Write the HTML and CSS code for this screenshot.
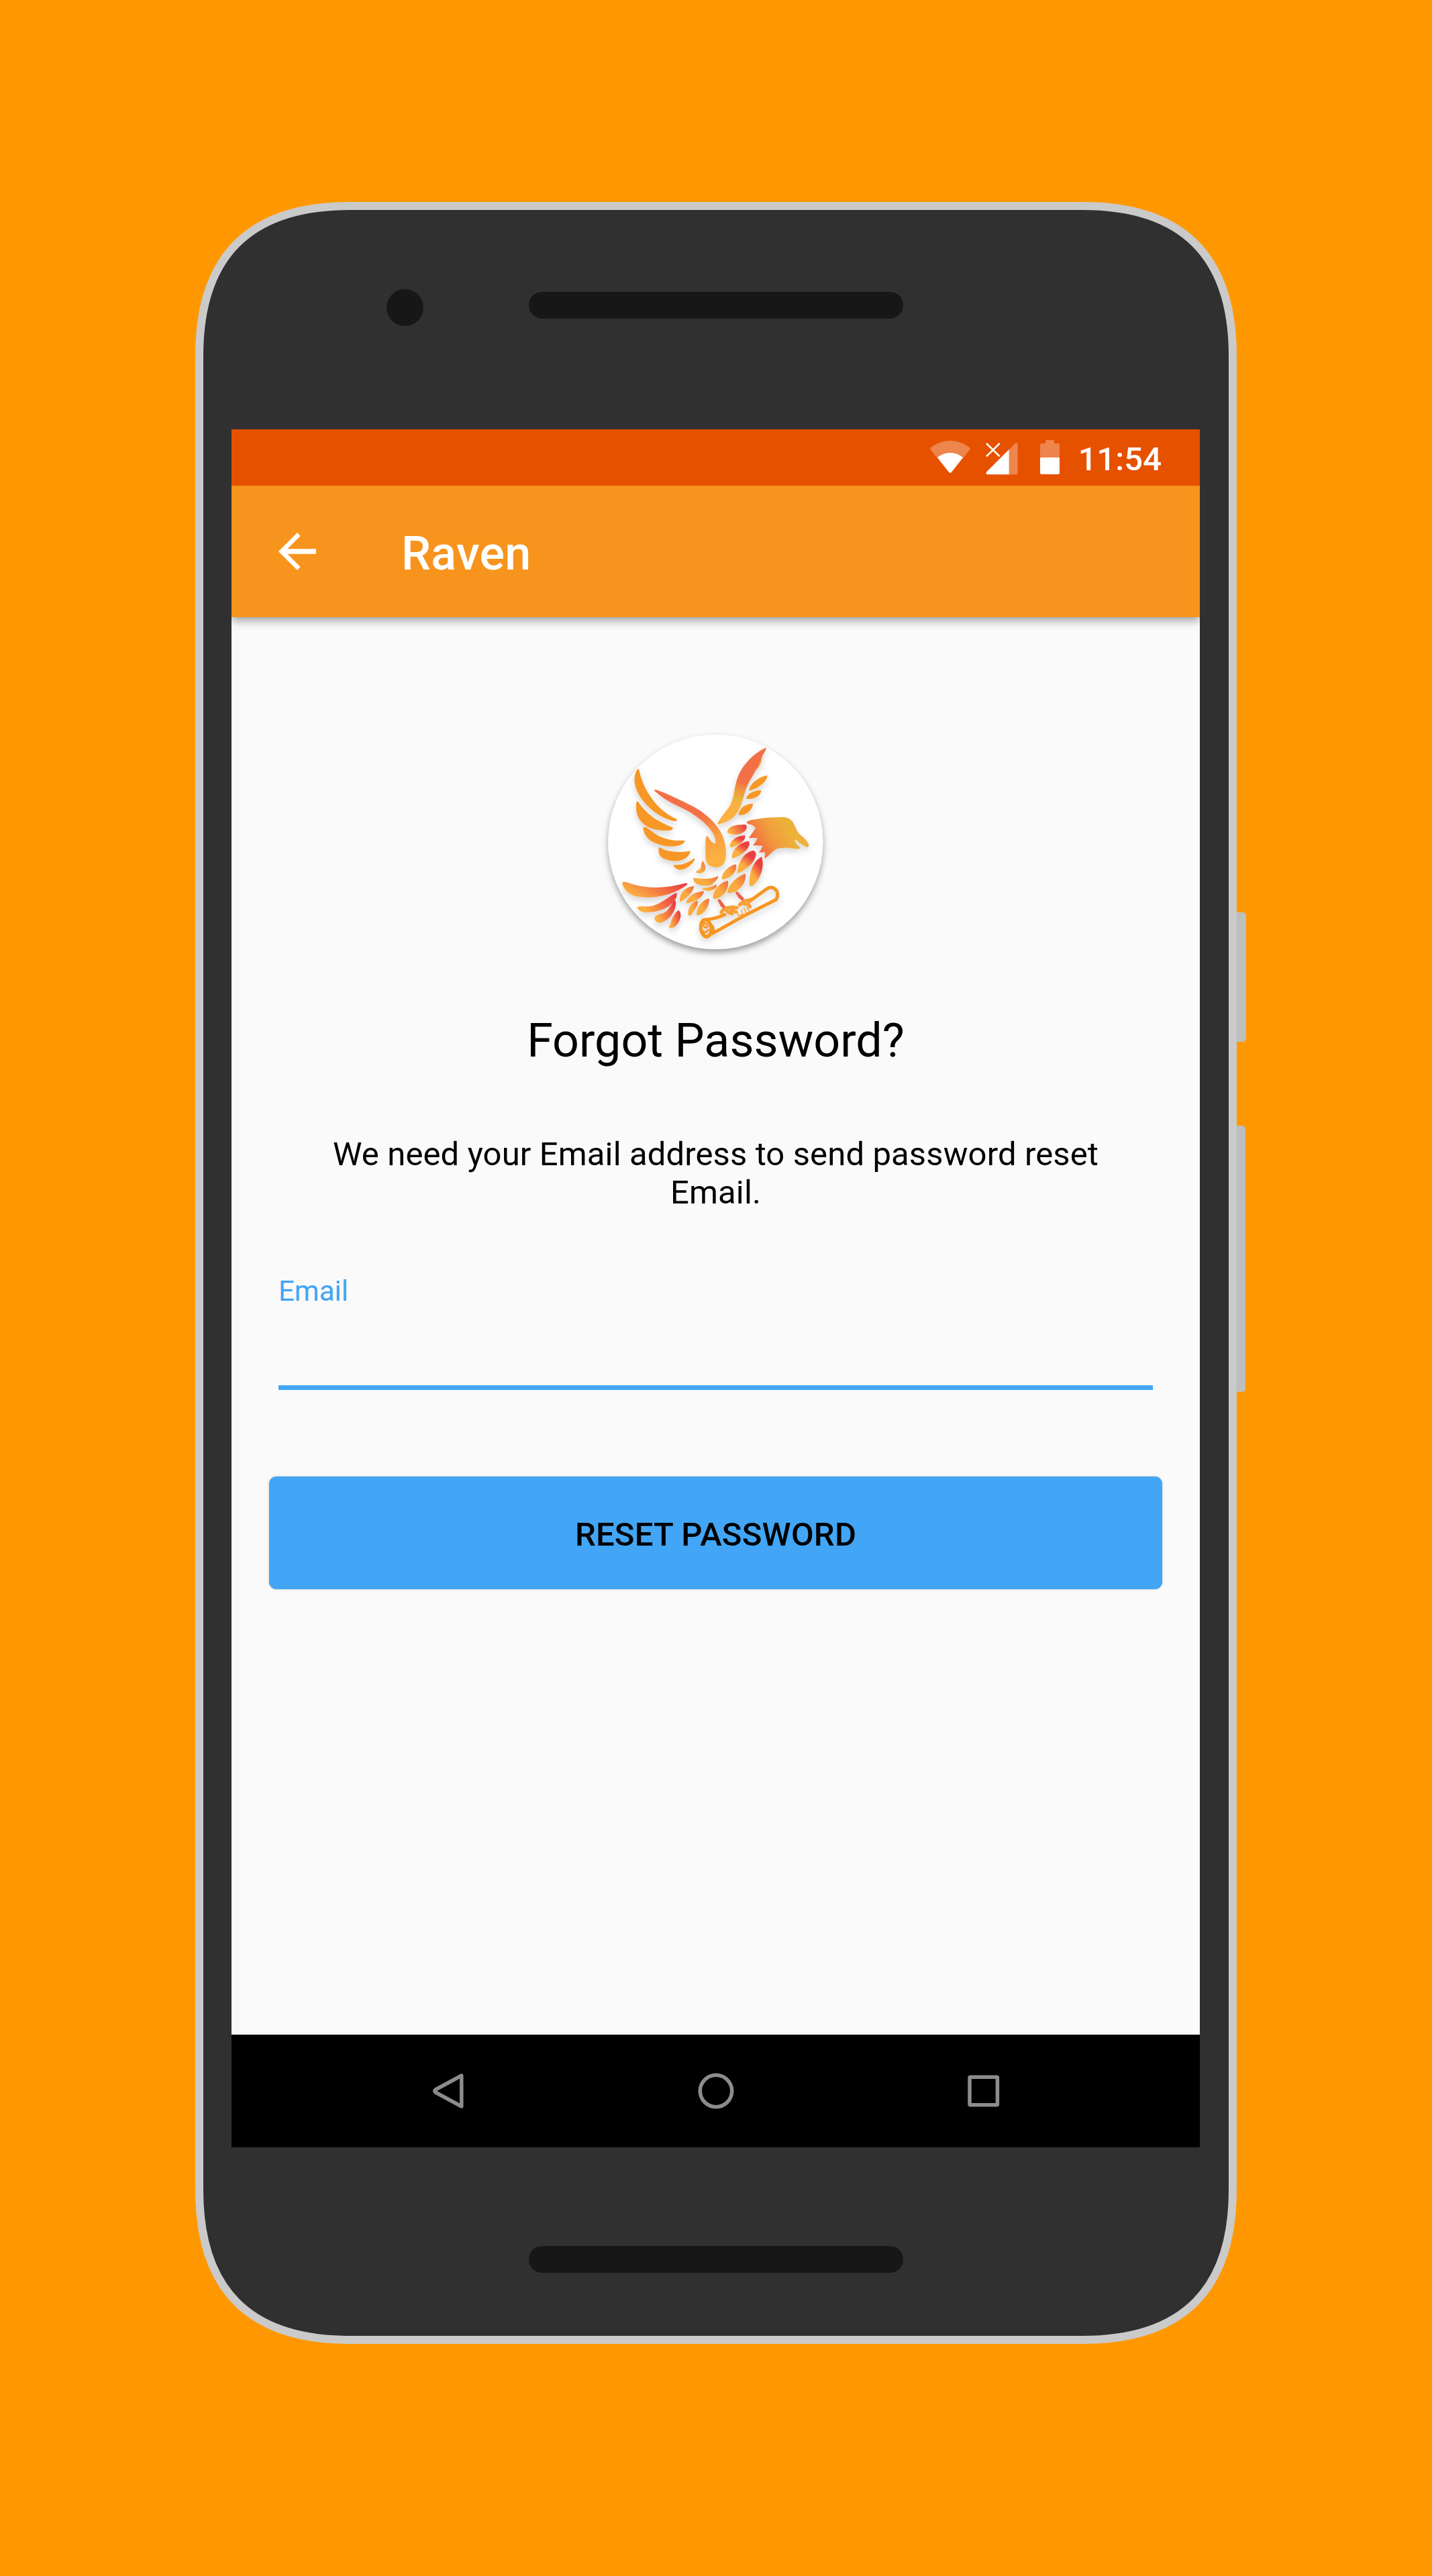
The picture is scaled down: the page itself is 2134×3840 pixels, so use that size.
FILE: index.html
```html
<!DOCTYPE html>
<html lang="en">
<head>
<meta charset="utf-8">
<title>Raven</title>
<link rel="stylesheet" href="styles.css">
</head>
<body>
<main class="stage">
  <div class="phone">
    <svg class="shell" viewBox="0 0 1566 3193" aria-hidden="true">
      <rect x="1530" y="1059" width="36" height="193" rx="5" fill="#bebebe"/>
      <rect x="1530" y="1377" width="35" height="397" rx="5" fill="#bebebe"/>
      <path d="M6 230Q6 6 230 6H1322Q1546 6 1546 230V2963Q1546 3187 1322 3187H230Q6 3187 6 2963Z" fill="#303030" stroke="#cacaca" stroke-width="12"/>
    </svg>
    <span class="camera"></span>
    <header class="bezel bezel-top"><span class="speaker"></span></header>
    <section class="screen">
      <div class="status">
        <svg class="wifi" viewBox="0 0 180 144"><path d="M3 41Q-3 34 4 29Q44 0 90 0T176 29Q183 34 177 41L96 140Q90 147 84 140Z" fill="#fff" opacity=".3"/><path d="M33 75Q58 54 90 54T147 75L96 140Q90 147 84 140Z" fill="#fff"/></svg>
        <svg class="cell" viewBox="0 0 144 144"><path d="M104 31L130 4Q143-4 143 9V135Q143 142 136 142H104Z" fill="#fff" opacity=".3"/><path d="M104 30V142H8Q-3 140 4 130Z" fill="#fff"/><path d="M3 3L62 61M62 3L3 61" stroke="#fff" stroke-width="8" fill="none"/></svg>
        <svg class="battery" viewBox="0 0 87 153"><path d="M24 0H63V15H80Q87 15 87 22V79H0V22Q0 15 7 15H24Z" fill="#fff" opacity=".3"/><path d="M0 78H87V146Q87 153 80 153H7Q0 153 0 146Z" fill="#fff"/></svg>
        <time class="clock">11:54</time>
      </div>
      <nav class="appbar">
        <svg class="back" viewBox="0 0 168 168"><path d="M168 73V95H40L98 153L84 168L0 84L84 0L98 15L40 73Z" fill="#fff"/></svg>
        <h1 class="brand">Raven</h1>
      </nav>
      <div class="content">
        <svg class="logo" viewBox="0 0 1110 1110" role="img" aria-label="Raven logo">
          <defs>
            <linearGradient id="wing" gradientUnits="userSpaceOnUse" x1="510" y1="430" x2="570" y2="620"><stop stop-color="#f37046"/><stop offset=".5" stop-color="#f99c40"/><stop offset="1" stop-color="#fbb040"/></linearGradient>
            <linearGradient id="up" gradientUnits="userSpaceOnUse" x1="685" y1="290" x2="635" y2="450"><stop stop-color="#f27046"/><stop offset=".12" stop-color="#f0883f"/><stop offset=".48" stop-color="#edb43c"/><stop offset=".6" stop-color="#fbb043"/></linearGradient>
            <linearGradient id="head" gradientUnits="userSpaceOnUse" x1="735" y1="565" x2="875" y2="485"><stop stop-color="#f26b43"/><stop offset=".5" stop-color="#f19a3d"/><stop offset="1" stop-color="#edb13a"/></linearGradient>
            <linearGradient id="tail" x1="0" y1=".7" x2="1" y2=".3"><stop offset=".1" stop-color="#fbb042"/><stop offset=".85" stop-color="#ee5042"/><stop offset="1" stop-color="#ea3c43"/></linearGradient>
            <linearGradient id="plume" x1=".2" y1="1" x2=".8" y2="0"><stop offset=".3" stop-color="#fbb042"/><stop offset=".75" stop-color="#ec4041"/></linearGradient>
            <linearGradient id="belly" x1="0" y1=".8" x2="1" y2=".1"><stop offset=".4" stop-color="#fbac40"/><stop offset="1" stop-color="#f27043"/></linearGradient>
            <filter id="lift" x="-20%" y="-20%" width="140%" height="150%"><feGaussianBlur stdDeviation="1.6"/><feDropShadow dx="0" dy="15" stdDeviation="14" flood-opacity=".17"/></filter>
            <filter id="disc" x="-20%" y="-20%" width="140%" height="140%"><feDropShadow dx="0" dy="15" stdDeviation="14" flood-opacity=".38"/></filter>
            <clipPath id="round"><circle cx="559" cy="555" r="480"/></clipPath>
          </defs>
          <circle cx="559" cy="555" r="480" fill="#fff" filter="url(#disc)"/>
          <g clip-path="url(#round)"><g filter="url(#lift)">
            <g fill="#f79727">
              <path d="M212 228C220 230 219 247 226 267C250 342 304 416 384 453Q392 464 376 462C322 455 255 405 220 350C190 301 191 251 212 228Z"/>
              <path d="M207 372C216 374 219 387 234 403C266 442 310 468 366 490Q373 501 355 504C301 507 249 497 221 457C200 426 202 390 207 372Z"/>
              <path d="M239 488Q249 487 264 500C305 535 350 552 420 549Q426 553 411 564C379 582 331 577 294 562C258 549 235 519 236 491Z"/>
              <path d="M306 578Q318 583 334 592C374 603 405 601 444 596Q450 600 440 613C416 648 363 645 327 629C304 617 302 600 306 578Z"/>
              <path d="M370 658Q387 658 406 656Q435 650 465 627Q469 633 458 647Q430 680 398 680Q373 675 370 658Z"/>
              <path d="M710 326C708 299 747 266 789 257C797 275 755 315 710 326Z"/>
              <path d="M696 363C698 338 729 326 762 323C765 345 736 366 696 363Z"/>
              <path d="M663 435C663 406 692 384 726 384C726 408 700 438 663 435Z"/>
              <path d="M768 174Q763 212 742 232Q730 237 729 229L738 205Z"/>
            </g>
            <path d="M568 472C580 448 604 421 622 395C647 353 640 290 672 236C703 186 741 154 785 133C788 146 765 170 757 196C738 246 708 279 693 324C681 363 672 409 644 441C625 459 600 468 574 477Q567 478 568 472Z" fill="url(#up)"/>
            <path d="M285 326Q286 319 300 324C345 340 395 365 438 386C503 417 551 458 579 506C597 535 606 571 606 608C606 649 589 668 561 668C529 668 515 650 514 621V551Q515 529 523 529L540 553Q555 567 559 560C564 516 508 461 445 422C399 396 353 382 309 346Z" fill="url(#wing)"/>
            <path d="M698 467C702 459 723 457 744 453C783 446 824 445 857 444C889 445 904 460 914 485C924 507 928 516 947 531Q968 547 977 571Q976 580 967 578Q938 566 922 548Q912 542 914 555Q922 568 940 583Q931 590 915 586C888 580 861 579 836 585C814 593 799 618 780 629Q776 625 780 615Q782 605 777 599Q768 604 753 602Q767 582 769 572Q751 572 726 571Q741 554 747 537Q736 536 707 538Q720 519 738 495Q729 477 703 475Z" fill="url(#head)"/>
            <g fill="url(#plume)">
              <path d="M612 513C610 486 647 477 693 478C708 492 690 515 660 521Q630 526 612 513Z" fill="url(#tail)"/>
              <path d="M623 580C621 550 652 528 690 526C700 546 657 577 623 580Z"/>
              <path d="M632 629C630 589 667 557 707 551C724 575 677 618 632 629Z"/>
              <path d="M656 695C659 647 682 606 725 593C758 598 731 651 694 676Q668 695 656 695Z"/>
              <path d="M711 751C706 700 725 642 765 621C782 669 753 735 720 754Z"/>
            </g>
            <g fill="url(#belly)">
              <path d="M587 722C587 687 622 661 650 655C660 683 629 721 587 722Z"/>
              <path d="M611 784C616 743 655 711 692 697C702 729 666 788 611 784Z"/>
              <path d="M547 808C548 765 582 735 614 728C625 755 591 817 547 808Z"/>
              <path d="M470 690C484 677 496 681 495 654L501 639Q516 656 513 677C507 695 486 701 470 690Z"/>
              <path d="M459 716C490 718 530 727 571 707C573 722 553 732 543 747C515 757 457 751 459 716Z"/>
              <path d="M495 765C526 758 544 758 561 745C569 763 555 762 546 771Q518 779 495 765Z"/>
              <path d="M399 825C395 782 427 754 463 753C461 778 430 807 399 825Z"/>
              <path d="M427 830C433 798 465 779 507 775C504 807 461 827 427 830Z"/>
              <path d="M438 884C431 849 457 820 480 818C482 845 455 871 448 886Z"/>
              <path d="M474 882C474 844 503 812 530 808C535 840 502 890 474 882Z"/>
            </g>
            <g fill="url(#tail)">
              <path d="M142 735C157 729 172 739 190 745C263 767 344 762 428 739Q436 740 431 747C370 796 267 815 193 796Q155 782 142 744Z"/>
              <path d="M208 848C221 840 241 844 260 844C305 840 343 803 384 782C394 807 359 842 323 857C274 873 222 879 208 848Z"/>
              <path d="M286 894C294 875 323 880 341 864C357 849 367 820 380 816C389 857 352 912 307 917Q286 913 286 894Z"/>
              <path d="M350 939C360 913 371 874 393 861C421 877 387 951 350 939Z"/>
            </g>
            <g fill="none" stroke="#f79622" stroke-width="15" stroke-linejoin="round" stroke-linecap="round">
              <path d="M518 902Q560 900 600 880M708 823L787 766Q812 748 833 775Q840 796 830 813L680 889L546 964"/>
              <ellipse cx="516" cy="941" rx="23" ry="38" transform="rotate(-8 516 941)" stroke-width="16"/>
              <path d="M507 916Q530 924 519 939Q502 938 507 921M505 955Q515 967 526 948" stroke-width="8"/>
              <path d="M518 902L549 934Q554 946 550 960" stroke-width="8"/>
            </g>
            <g fill="none" stroke="#f99f35" stroke-linecap="round" stroke-linejoin="round">
              <path d="M585 870Q594 851 617 849L641 846Q650 853 655 849M604 858Q615 872 633 876M624 855L650 869M667 837Q681 817 704 817L718 812M678 830L704 834L713 845" stroke-width="15"/>
              <path d="M655 865Q660 874 660 886L675 880M674 860L681 879M686 853L696 872M699 847L709 862" stroke-width="5"/>
            </g>
            <path d="M568 815Q574 808 581 814L602 842L596 855L581 842ZM648 784Q650 773 660 780L686 806L682 820L663 807Z" fill="#f16245"/>
          </g></g>
        </svg>
        <h2 class="title">Forgot Password?</h2>
        <p class="hint">We need your Email address to send password reset Email.</p>
        <label class="field"><span class="field-label">Email</span></label>
        <button class="reset" type="button">RESET PASSWORD</button>
      </div>
      <footer class="navbar">
        <svg class="navicon" viewBox="0 0 56 56"><path d="M47.800 5V51L9 30Q6.500 28 9 26Z"/></svg>
        <svg class="navicon" viewBox="0 0 56 56"><circle cx="28" cy="28" r="23.700"/></svg>
        <svg class="navicon" viewBox="0 0 56 56"><rect x="7" y="7.300" width="41.400" height="41.400" rx="1"/></svg>
      </footer>
    </section>
    <div class="bezel bezel-bottom"><span class="speaker"></span></div>
  </div>
</main>
</body>
</html>
```
FILE: styles.css
```css
* { box-sizing: border-box; margin: 0; padding: 0; }
body { background: #ff9800; font-family: Roboto, "Liberation Sans", sans-serif; }
svg { display: block; flex: none; }

.stage { width: 2134px; height: 3840px; padding: 301px 0 0 291px; overflow: hidden; }
.phone { position: relative; width: 1552px; height: 3193px; padding: 0 55px 0 54px; display: flex; flex-direction: column; }
.shell { position: absolute; left: 0; top: 0; width: 1566px; height: 3193px; }
.camera { position: absolute; left: 285px; top: 130px; width: 55px; height: 55px; border-radius: 50%; background: #171717; }
.bezel { position: relative; display: flex; justify-content: center; flex: none; }
.bezel-top { height: 339px; padding-top: 134px; }
.bezel-bottom { height: 292px; padding-top: 147px; }
.speaker { width: 558px; height: 40px; border-radius: 20px; background: #171717; }

.screen { position: relative; width: 1443px; height: 2561px; display: flex; flex-direction: column; background: #fafafa; overflow: hidden; }
.status { position: relative; z-index: 1; height: 84px; flex: none; background: #e65100; display: flex; justify-content: flex-end; align-items: flex-start; padding-right: 57px; }
.wifi { width: 60px; height: 48px; margin: 17px 23px 0 0; }
.cell { width: 48px; height: 48px; margin: 20px 33px 0 0; }
.battery { width: 29px; height: 51px; margin: 16px 28px 0 0; }
.clock { font-size: 49px; font-weight: 500; line-height: 58px; margin-top: 16px; color: #fff; }

.appbar { position: relative; height: 196px; flex: none; background: #f7941d; display: flex; align-items: center; padding-left: 70px; box-shadow: 0 4px 14px rgba(0, 0, 0, .42); }
.back { width: 56px; height: 56px; }
.brand { margin: 6px 0 0 127px; font-size: 70px; line-height: 82px; font-weight: 500; letter-spacing: .3px; color: #fff; }

.content { flex: 1; display: flex; flex-direction: column; align-items: center; padding-top: 150px; }
.logo { width: 370px; height: 370px; margin-right: 3px; }
.title { margin-top: 70px; font-size: 70px; line-height: 82px; font-weight: 400; color: #000; }
.hint { width: 1240px; margin-top: 100px; font-size: 49px; line-height: 57px; letter-spacing: .12px; text-align: center; color: #000; }
.field { width: 1303px; height: 172px; margin-top: 94px; border-bottom: 7px solid #42a5f5; }
.field-label { display: block; font-size: 42px; line-height: 50px; color: #42a5f5; }
.reset { width: 1331px; height: 168px; margin-top: 129px; padding-top: 5px; border: 0; border-radius: 11px; background: #42a5f5; font: 500 49px/58px Roboto, "Liberation Sans", sans-serif; letter-spacing: .2px; color: #000; box-shadow: 0 0 3px rgba(0, 0, 0, .25); }

.navbar { height: 168px; flex: none; background: #000; display: flex; align-items: center; justify-content: center; gap: 343px; }
.navicon { width: 56px; height: 56px; fill: none; stroke: #8c8c8c; stroke-width: 5.500; stroke-linejoin: round; }
```
